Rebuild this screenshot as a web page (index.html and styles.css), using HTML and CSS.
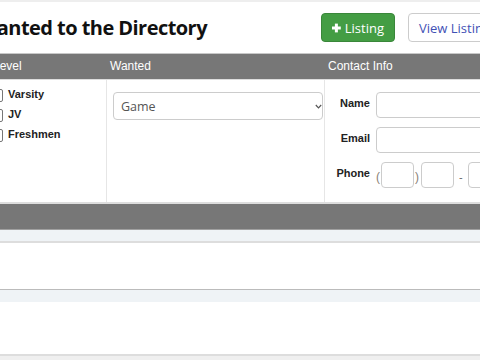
FILE: index.html
```html
<!DOCTYPE html>
<html>
<head>
<meta charset="utf-8">
<link rel="stylesheet" href="styles.css">
</head>
<body>
<div class="topstrip"></div>
<div class="page">
  <header class="head">
    <h1 class="title">Wanted to the Directory</h1>
    <a class="btn btn-add"><svg class="plus" width="10" height="10" viewBox="0 0 10 10"><rect x="3.3" y="0" width="3.4" height="10" fill="#fff"/><rect x="0" y="3.3" width="10" height="3.4" fill="#fff"/></svg>Listing</a>
    <a class="btn btn-view">View Listings</a>
  </header>

  <div class="tbl">
    <div class="thead">
      <div class="th c1">Level</div>
      <div class="th c2">Wanted</div>
      <div class="th c3">Contact Info</div>
    </div>
    <div class="trow">
      <div class="td c1 levels">
        <div class="chk"><span class="box"></span><span class="lbl">Varsity</span></div>
        <div class="chk"><span class="box"></span><span class="lbl">JV</span></div>
        <div class="chk"><span class="box"></span><span class="lbl">Freshmen</span></div>
      </div>
      <div class="td c2 wanted">
        <div class="select"><span>Game</span><svg class="chev" width="7" height="5" viewBox="0 0 7 5"><path d="M0.8 1 L3.5 3.8 L6.2 1" fill="none" stroke="#555" stroke-width="1.2"/></svg></div>
      </div>
      <div class="td c3 contact">
        <div class="frow"><span class="flbl">Name</span><span class="inp wide"></span></div>
        <div class="frow"><span class="flbl">Email</span><span class="inp wide"></span></div>
        <div class="frow"><span class="flbl">Phone</span><span class="paren">(</span><span class="inp ph"></span><span class="paren pr">)</span><span class="inp ph"></span><span class="dash">-</span><span class="inp ph"></span></div>
      </div>
    </div>
  </div>

  <div class="section">
    <div class="sbar"></div>
    <div class="band b1"></div>
    <div class="blank w1"></div>
    <div class="band b2"></div>
    <div class="blank w2"></div>
  </div>
</div>
</body>
</html>
```

FILE: styles.css
```css
html, body {
  margin: 0;
  padding: 0;
  overflow: hidden;
  background: #efefef;
}
body {
  width: 480px;
  height: 360px;
  font-family: "Liberation Sans", Arial, sans-serif;
}
.topstrip {
  height: 2px;
  background: #eeeeee;
}
.page {
  margin-left: -18px;
  width: 640px;
  background: #fff;
}
.head {
  height: 51px;
  display: grid;
  grid-template-columns: 326px auto auto;
  column-gap: 13px;
  align-items: center;
  justify-content: start;
}
.title {
  margin: 0 0 0 -4px;
  font-family: "Open Sans", sans-serif;
  font-weight: 700;
  font-size: 20px;
  letter-spacing: -0.55px;
  color: #111;
  line-height: 27px;
  white-space: nowrap;
}
.btn {
  box-sizing: border-box;
  height: 29px;
  display: flex;
  align-items: center;
  font-family: "Open Sans", sans-serif;
  font-size: 13px;
  border-radius: 4px;
  padding: 0 10px;
  white-space: nowrap;
}
.btn-add {
  width: 74px;
  background: #449d44;
  border: 1px solid #3a873a;
  color: #fff;
}
.plus {
  margin-right: 4px;
}
.btn-view {
  background: #fff;
  border: 1px solid #cccccc;
  color: #3f51b5;
}
.tbl {
  margin-left: 7px;
}
.thead {
  display: flex;
  height: 25px;
  background: #777777;
  border-top: 1px solid #c8c8c8;
  border-bottom: 1px solid #dddddd;
}
.th {
  box-sizing: border-box;
  color: #fff;
  font-size: 12px;
  line-height: 25px;
  padding-left: 4px;
}
.c1 { width: 117px; flex: none; }
.c2 { width: 218px; flex: none; }
.c3 { flex: 1; }
.trow {
  display: flex;
  height: 122px;
  border-bottom: 2px solid #dddddd;
}
.td {
  box-sizing: border-box;
}
.td.c2, .td.c3 {
  border-left: 1px solid #e6e6e6;
}
.levels {
  padding-top: 4px;
}
.chk {
  height: 20px;
  display: flex;
  align-items: center;
}
.box {
  box-sizing: border-box;
  width: 13px;
  height: 13px;
  margin-left: 1px;
  margin-top: 2px;
  border: 1px solid #777;
  border-radius: 2px;
  background: #fff;
}
.lbl {
  margin-left: 5px;
  font-size: 11px;
  font-weight: 700;
  color: #222;
}
.wanted {
  padding: 12px 0 0 6px;
}
.select {
  box-sizing: border-box;
  width: 210px;
  height: 28px;
  border: 1px solid #cccccc;
  border-radius: 4px;
  display: flex;
  align-items: center;
  justify-content: space-between;
  padding: 0 0 0 7px;
  font-family: "Open Sans", sans-serif;
  font-size: 12.5px;
  color: #555;
}
.chev {
  margin-top: 1px;
}
.contact {
  padding-top: 12px;
  display: flex;
  flex-direction: column;
  gap: 9px;
}
.frow {
  display: flex;
  align-items: center;
  height: 26px;
}
.flbl {
  width: 45px;
  flex: none;
  align-self: flex-start;
  line-height: 22px;
  text-align: right;
  font-size: 11px;
  font-weight: 700;
  color: #222;
  margin-right: 6px;
}
.inp {
  box-sizing: border-box;
  height: 26px;
  border: 1px solid #cccccc;
  border-radius: 4px;
  background: #fff;
  flex: none;
}
.wide { width: 220px; }
.ph { width: 33px; }
.paren {
  color: #8a7f75;
  font-size: 12px;
  width: 4px;
  margin-right: 1px;
  padding-top: 3px;
}
.pr {
  margin-left: 1px;
  margin-right: 2px;
}
.dash {
  color: #666;
  font-size: 11px;
  margin: 0 5px 0 5px;
  padding-top: 3px;
}
.section {
  width: 100%;
}
.sbar {
  height: 25px;
  background: #777777;
  border-bottom: 1px solid #a0a0a0;
}
.band {
  background: #eff3f6;
}
.b1 {
  height: 11px;
  border-bottom: 2px solid #dddddd;
}
.w1 {
  height: 46px;
  background: #fff;
  border-bottom: 1px solid #bbbbbb;
}
.b2 {
  height: 12px;
}
.w2 {
  height: 52px;
  background: #fff;
  border-bottom: 2px solid #dddddd;
}
```
